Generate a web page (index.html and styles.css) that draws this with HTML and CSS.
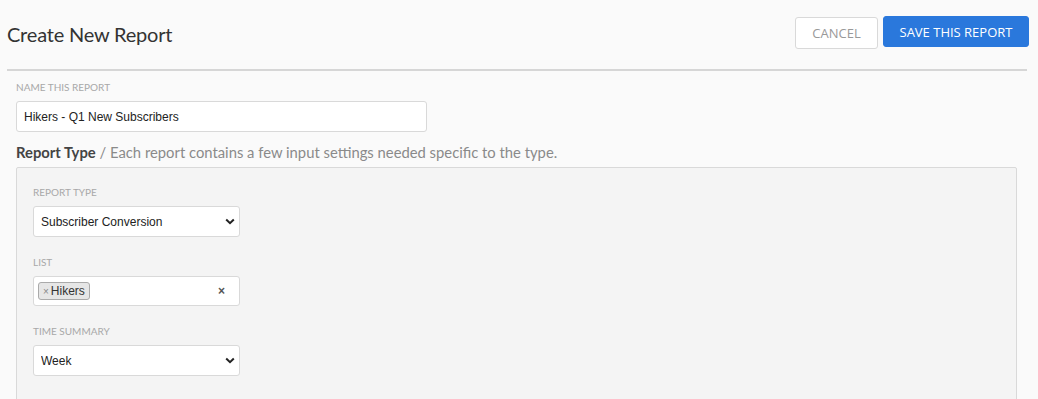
FILE: index.html
```html
<!DOCTYPE html>
<html lang="en">
<head>
    <meta charset="UTF-8">
    <meta name="viewport" content="width=device-width, initial-scale=1.0">
    <title>Create New Report</title>
    <link rel="stylesheet" href="styles.css">
</head>
<body>
    <div class="page-header">
        <h1 class="page-title">Create New Report</h1>
        <div class="header-actions">
            <button class="btn btn-cancel">Cancel</button>
            <button class="btn btn-save">Save This Report</button>
        </div>
    </div>
    <div class="divider"></div>

    <div class="report-form">
        <label class="field-label">Name This Report</label>
        <input class="text-input" type="text" value="Hikers - Q1 New Subscribers">

        <p class="section-title"><strong>Report Type</strong> / Each report contains a few input settings needed specific to the type.</p>

        <div class="settings-panel">
            <label class="field-label">Report Type</label>
            <div class="select-wrap">
                <select class="select-input">
                    <option>Subscriber Conversion</option>
                </select>
                <svg class="chevron" viewBox="0 0 10 7"><polyline points="1.2,1.5 5,5.2 8.8,1.5" fill="none" stroke="#222" stroke-width="2"></polyline></svg>
            </div>

            <label class="field-label spaced">List</label>
            <div class="tag-input">
                <span class="tag"><span class="tag-remove">×</span>Hikers</span>
                <span class="tag-clear">×</span>
            </div>

            <label class="field-label spaced">Time Summary</label>
            <div class="select-wrap">
                <select class="select-input">
                    <option>Week</option>
                </select>
                <svg class="chevron" viewBox="0 0 10 7"><polyline points="1.2,1.5 5,5.2 8.8,1.5" fill="none" stroke="#222" stroke-width="2"></polyline></svg>
            </div>
        </div>
    </div>
</body>
</html>
```

FILE: styles.css
```css
* {
    margin: 0;
    padding: 0;
    box-sizing: border-box;
}

body {
    font-family: Lato, 'Open Sans', sans-serif;
    background: #fafafa;
    color: #333;
    overflow: hidden;
}

.page-header {
    display: flex;
    justify-content: space-between;
    align-items: center;
    padding: 16px 9px 0 7px;
    margin-bottom: 20px;
}

.page-title {
    font-size: 20px;
    font-weight: 400;
    color: #333;
    letter-spacing: -0.2px;
    margin-top: 3px;
}

.header-actions {
    display: flex;
    gap: 5px;
}

.btn {
    font-family: 'Open Sans', sans-serif;
    font-size: 13px;
    text-transform: uppercase;
    height: 32px;
    border-radius: 3px;
    cursor: pointer;
}

.btn-cancel {
    background: #fff;
    border: 1px solid #d9d9d9;
    color: #999;
    width: 83px;
    margin-top: 1px;
}

.btn-save {
    background: #2a78dc;
    border: 1px solid #2a78dc;
    color: #fff;
    width: 146px;
    height: 31px;
}

.divider {
    height: 2px;
    background: #d6d6d6;
    margin: 0 11px 0 7px;
}

.report-form {
    padding: 9px 21px 0 16px;
}

.field-label {
    display: block;
    font-size: 10px;
    line-height: 14px;
    color: #a8a8a8;
    text-transform: uppercase;
    margin-bottom: 7px;
}

.field-label.spaced {
    margin-top: 18px;
}

.text-input {
    display: block;
    width: 411px;
    height: 31px;
    border: 1px solid #d9d9d9;
    border-radius: 3px;
    background: #fff;
    padding: 0 7px;
    font-family: 'Liberation Sans', Arial, sans-serif;
    font-size: 12px;
    color: #222;
}

.section-title {
    font-size: 14.8px;
    line-height: 20px;
    color: #8a8a8a;
    margin-top: 10px;
    margin-bottom: 5px;
}

.section-title strong {
    color: #444;
    font-weight: 700;
}

.settings-panel {
    background: #f4f4f4;
    border: 1px solid #d9d9d9;
    border-radius: 2px;
    padding: 17px 16px 60px;
}

.select-wrap {
    position: relative;
    width: 207px;
}

.select-input {
    appearance: none;
    -webkit-appearance: none;
    display: block;
    width: 100%;
    height: 31px;
    border: 1px solid #d9d9d9;
    border-radius: 3px;
    background: #fff;
    padding: 0 7px;
    font-family: 'Liberation Sans', Arial, sans-serif;
    font-size: 12px;
    color: #222;
}

.chevron {
    position: absolute;
    right: 5px;
    top: 12px;
    width: 10px;
    height: 7px;
}

.tag-input {
    display: flex;
    align-items: center;
    justify-content: space-between;
    width: 207px;
    height: 30px;
    border: 1px solid #d9d9d9;
    border-radius: 3px;
    background: #fff;
    padding: 0 14px 0 4px;
    font-family: 'Liberation Sans', Arial, sans-serif;
}

.tag {
    display: flex;
    align-items: center;
    height: 18px;
    padding: 0 4px 0 4px;
    background: #e6e6e6;
    border: 1px solid #aaa;
    border-radius: 3px;
    font-size: 12px;
    color: #333;
}

.tag-remove {
    font-size: 10px;
    color: #888;
    margin-right: 2px;
}

.tag-clear {
    font-size: 12px;
    font-weight: 700;
    color: #555;
}
```
